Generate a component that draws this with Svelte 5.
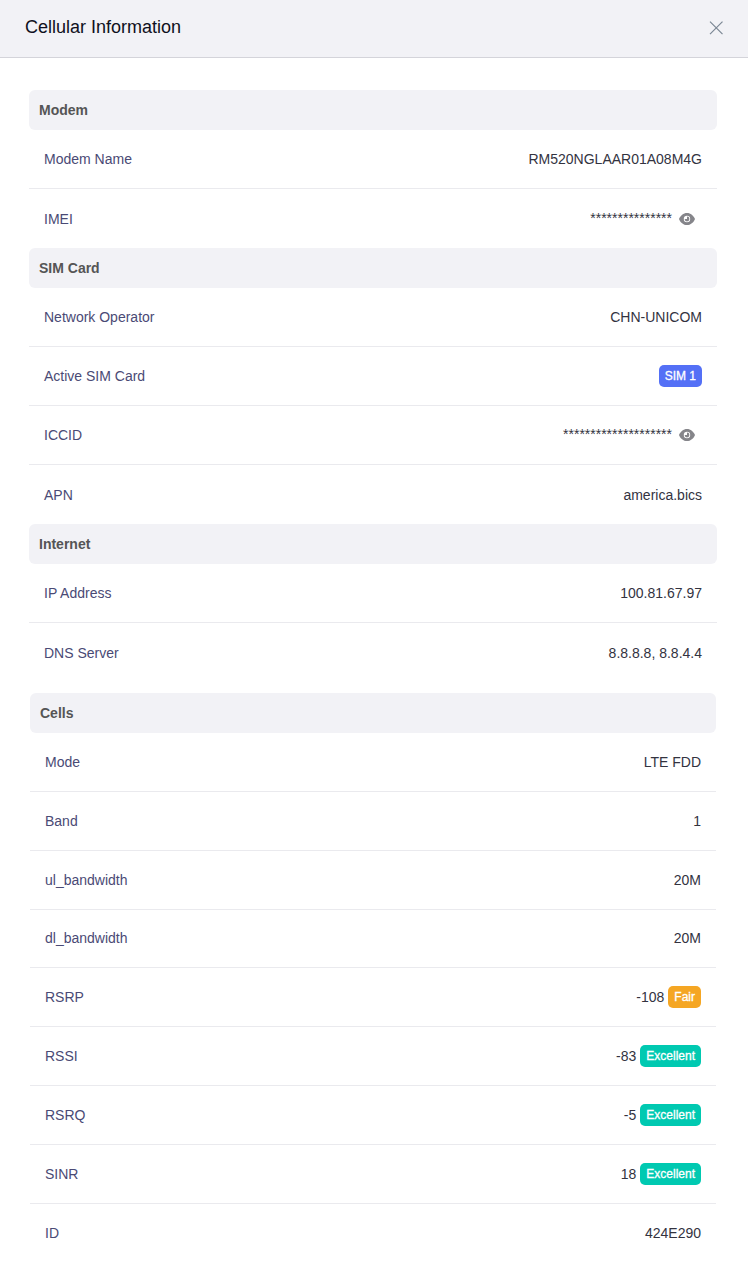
<script>
	const info = [
		{
			title: 'Modem',
			rows: [
				{ label: 'Modem Name', value: 'RM520NGLAAR01A08M4G' },
				{ label: 'IMEI', value: '***************', secret: true }
			]
		},
		{
			title: 'SIM Card',
			rows: [
				{ label: 'Network Operator', value: 'CHN-UNICOM' },
				{ label: 'Active SIM Card', badge: 'SIM 1', tone: 'blue' },
				{ label: 'ICCID', value: '********************', secret: true },
				{ label: 'APN', value: 'america.bics' }
			]
		},
		{
			title: 'Internet',
			rows: [
				{ label: 'IP Address', value: '100.81.67.97' },
				{ label: 'DNS Server', value: '8.8.8.8, 8.8.4.4' }
			]
		}
	];

	const cells = [
		{ label: 'Mode', value: 'LTE FDD' },
		{ label: 'Band', value: '1' },
		{ label: 'ul_bandwidth', value: '20M' },
		{ label: 'dl_bandwidth', value: '20M' },
		{ label: 'RSRP', value: '-108', badge: 'Fair', tone: 'orange' },
		{ label: 'RSSI', value: '-83', badge: 'Excellent', tone: 'green' },
		{ label: 'RSRQ', value: '-5', badge: 'Excellent', tone: 'green' },
		{ label: 'SINR', value: '18', badge: 'Excellent', tone: 'green' },
		{ label: 'ID', value: '424E290' }
	];
</script>

{#snippet row(item)}
	<div class="row">
		<span class="label">{item.label}</span>
		<span class="value">
			{#if item.value}<span class:stars={item.secret}>{item.value}</span>{/if}
			{#if item.badge}<span class="badge {item.tone}">{item.badge}</span>{/if}
			{#if item.secret}
				<svg class="eye" viewBox="0 0 16 16" aria-hidden="true">
					<path fill-rule="evenodd" d="M8 1.9C4.4 1.9 1.3 4.5 0 8c1.3 3.5 4.4 6.1 8 6.1s6.7-2.6 8-6.1C14.7 4.5 11.6 1.9 8 1.9zM8 11.2A3.2 3.2 0 1 1 8 4.8a3.2 3.2 0 0 1 0 6.4z" />
					<path d="M8 5.6A2.4 2.4 0 1 1 5.6 8H8z" />
				</svg>
			{/if}
		</span>
	</div>
{/snippet}

<div class="panel">
	<header class="head">
		<h2>Cellular Information</h2>
		<button class="close" aria-label="Close">
			<svg viewBox="0 0 16 16" width="16" height="16" aria-hidden="true">
				<path d="M2 1.7l12.5 12.5M14.5 1.7L2 14.2" />
			</svg>
		</button>
	</header>

	<div class="body">
		<div class="group">
			{#each info as section}
				<h3>{section.title}</h3>
				{#each section.rows as item}
					{@render row(item)}
				{/each}
			{/each}
		</div>

		<div class="group cells">
			<h3>Cells</h3>
			{#each cells as item}
				{@render row(item)}
			{/each}
		</div>
	</div>
</div>

<style>
	:global(body) {
		background: #fff;
		font-family: 'Liberation Sans', Arial, sans-serif;
	}

	.panel {
		width: 748px;
	}

	.head {
		display: flex;
		align-items: center;
		justify-content: space-between;
		box-sizing: border-box;
		height: 58px;
		padding: 0 24px 2px 25px;
		background: #f2f2f6;
		border-bottom: 1px solid #d4d4da;
	}

	h2 {
		margin: 0;
		font-size: 18px;
		font-weight: 400;
		color: #0f1020;
	}

	.close {
		display: flex;
		padding: 0;
		border: 0;
		background: none;
		cursor: pointer;
	}

	.close path {
		fill: none;
		stroke: #7b8794;
		stroke-width: 1.2;
	}

	.body {
		padding: 32px 31px 0 29px;
	}

	.cells {
		margin: 11px 1px 0;
	}

	h3 {
		display: flex;
		align-items: center;
		box-sizing: border-box;
		height: 40px;
		margin: 0;
		padding-left: 10px;
		border-radius: 6px;
		background: #f2f2f6;
		font-size: 14px;
		font-weight: 700;
		color: #555;
	}

	.row {
		display: flex;
		align-items: center;
		justify-content: space-between;
		box-sizing: border-box;
		height: 59px;
		padding: 0 15px;
		border-bottom: 1px solid #eaeaee;
		font-size: 14px;
	}

	.cells .row {
		height: 58.85px;
	}

	.row:has(+ h3),
	.row:last-child {
		border-bottom: 0;
	}

	.label {
		color: #4a4a75;
	}

	.value {
		display: flex;
		align-items: center;
		gap: 4px;
		color: #33333f;
	}

	.stars {
		margin-top: -2px;
	}

	.badge {
		box-sizing: border-box;
		height: 22px;
		padding: 0 6px;
		border-radius: 5px;
		font-size: 12px;
		font-weight: 400;
		line-height: 22px;
		color: #fff;
		-webkit-text-stroke: 0.3px #fff;
	}

	.blue {
		background: #5470f6;
	}

	.orange {
		background: #f5a623;
	}

	.green {
		background: #00c9b1;
	}

	.eye {
		width: 16px;
		height: 16px;
		margin: 0 7px 0 3px;
		fill: #85858a;
	}
</style>
